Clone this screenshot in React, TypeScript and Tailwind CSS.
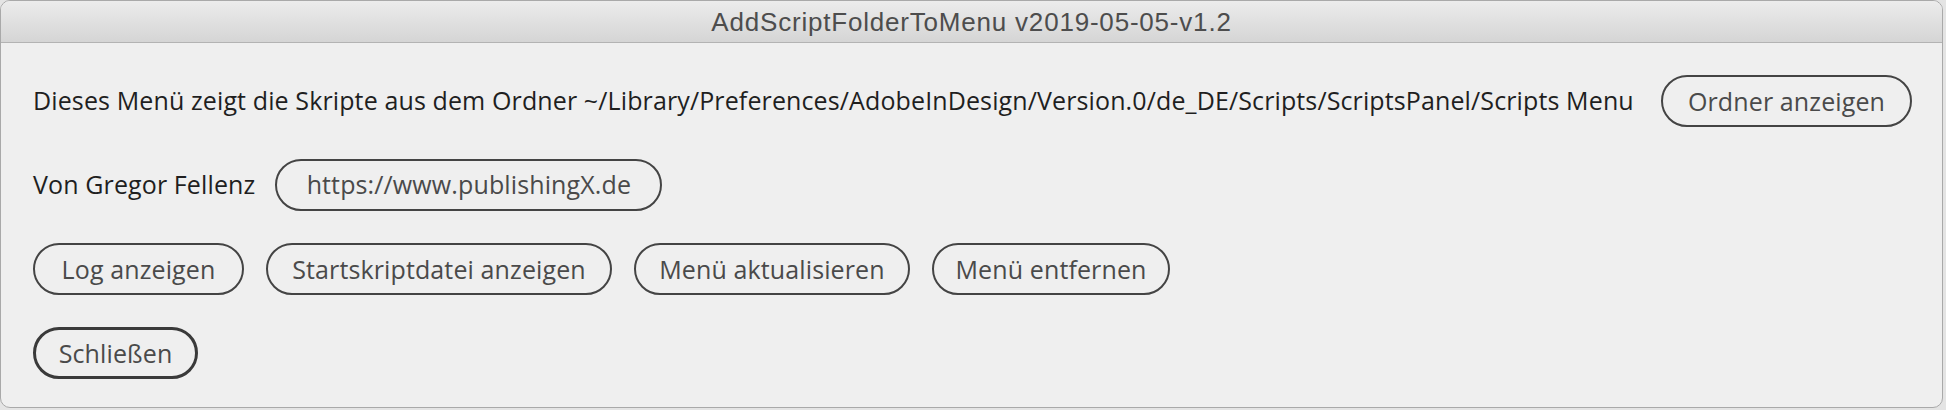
import React from 'react';

const body = "font-['Open_Sans','Noto_Sans',sans-serif]";

interface PillProps {
    label: string;
    width: string;
    isDefault?: boolean;
}

const Pill: React.FC<PillProps> = ({ label, width, isDefault }) => (
    <button
        className={`${width} h-[52px] shrink-0 rounded-full bg-transparent text-[25px] tracking-[0.12px] leading-none text-[#4a4a4a] ${body} ${
            isDefault ? 'border-[3px] border-[#3a3a3a]' : 'border-2 border-[#444444]'
        }`}
    >
        {label}
    </button>
);

const App: React.FC = () => {
    return (
        <div className="w-[1946px] h-[410px] bg-[#e4e4e4] overflow-hidden">
            <div className="w-[1943px] h-[408px] flex flex-col rounded-[10px] border border-[#a9a9a9] bg-[#efefef] overflow-hidden">
                <div className="h-[42px] shrink-0 flex items-center justify-center bg-gradient-to-b from-[#ececec] to-[#d5d5d5] border-b border-[#b3b3b3]">
                    <span className="font-['Liberation_Sans',Arial,sans-serif] text-[26px] tracking-[0.8px] text-[#4d4d4d] leading-none pt-[1px]">
                        AddScriptFolderToMenu v2019-05-05-v1.2
                    </span>
                </div>

                <div className={`flex flex-col pt-[32px] pl-[32px] pr-[30px] ${body} text-[25px] tracking-[0.12px] text-[#1f1f1f]`}>
                    <div className="flex items-center justify-between h-[52px]">
                        <span className="whitespace-nowrap">
                            Dieses Menü zeigt die Skripte aus dem Ordner ~/Library/Preferences/AdobeInDesign/Version.0/de_DE/Scripts/ScriptsPanel/Scripts Menu
                        </span>
                        <Pill label="Ordner anzeigen" width="w-[251px]" />
                    </div>

                    <div className="flex items-center gap-[20px] h-[53px] mt-[31px]">
                        <span className="whitespace-nowrap">Von Gregor Fellenz</span>
                        <Pill label="https://www.publishingX.de" width="w-[387px]" />
                    </div>

                    <div className="flex items-center gap-[22px] h-[52px] mt-[32px]">
                        <Pill label="Log anzeigen" width="w-[211px]" />
                        <Pill label="Startskriptdatei anzeigen" width="w-[346px]" />
                        <Pill label="Menü aktualisieren" width="w-[276px]" />
                        <Pill label="Menü entfernen" width="w-[238px]" />
                    </div>

                    <div className="flex items-center h-[52px] mt-[32px]">
                        <Pill label="Schließen" width="w-[165px]" isDefault />
                    </div>
                </div>
            </div>
        </div>
    );
};

export default App;
